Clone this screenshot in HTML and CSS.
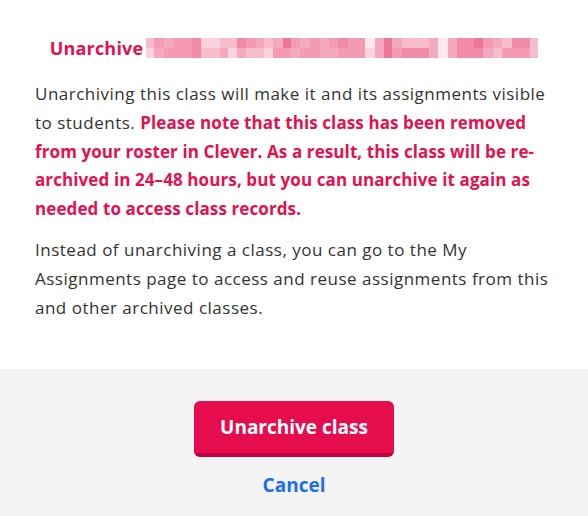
FILE: index.html
```html
<!DOCTYPE html>
<html lang="en">
<head>
    <meta charset="UTF-8">
    <title>Unarchive class</title>
    <link rel="stylesheet" href="styles.css">
</head>
<body>
    <div class="modal">
        <div class="modal-body">
            <h2 class="modal-title">
                <span>Unarchive</span>
                <!-- class name is redacted -->
                <span class="redacted"></span>
            </h2>
            <p>Unarchiving this class will make it and its assignments visible to students. <strong class="warning">Please note that this class has been removed from your roster in Clever. As a result, this class will be re-archived in 24–48 hours, but you can unarchive it again as needed to access class records.</strong></p>
            <p>Instead of unarchiving a class, you can go to the My Assignments page to access and reuse assignments from this and other archived classes.</p>
        </div>
        <div class="modal-footer">
            <button class="primary-btn">Unarchive class</button>
            <a href="#" class="cancel-link">Cancel</a>
        </div>
    </div>
</body>
</html>
```

FILE: styles.css
```css
body {
    margin: 0;
    font-family: "Open Sans", "Noto Sans", sans-serif;
    background-color: #ffffff;
    color: #333333;
}
.modal {
    width: 588px;
    height: 516px;
    display: flex;
    flex-direction: column;
}
.modal-body {
    padding: 34px 35px 0 35px;
    height: 336px;
}
.modal-title {
    display: flex;
    align-items: center;
    justify-content: center;
    gap: 3px;
    margin: 0 0 18px 0;
    font-size: 18px;
    font-weight: 700;
    letter-spacing: 0.2px;
    color: #e5104f;
    line-height: 28px;
}
.redacted {
    width: 392px;
    height: 20px;
    background-image:
        linear-gradient(to right,
            #f7bccd 0 2.1%, #f39ab4 2.1% 4.5%, #f5a9c0 4.5% 6.9%, #f39ab4 6.9% 11.7%,
            #f08aa9 11.7% 14.1%, #fad3df 14.1% 18.9%, #f7bccd 18.9% 23.2%, #f08aa9 23.2% 25.6%,
            #f39ab4 25.6% 28%, #f5a9c0 28% 30.1%, #f7bccd 30.1% 32.5%, #f5a9c0 32.5% 34.9%,
            #ec769a 34.9% 37.1%, #f39ab4 37.1% 39.4%, #f5a9c0 39.4% 41.9%, #f39ab4 41.9% 44.3%,
            #f5a9c0 44.3% 46.7%, #f39ab4 46.7% 49.1%, #f08aa9 49.1% 51.5%, #f39ab4 51.5% 55.9%,
            #fde9ef 55.9% 58.3%, #f5a9c0 58.3% 60.7%, #ec769a 60.7% 62.8%, #f5a9c0 62.8% 65.2%,
            #f7bccd 65.2% 72.2%, #f5a9c0 72.2% 74.6%, #fde9ef 74.6% 77%, #f5a9c0 77% 79.4%,
            #f08aa9 79.4% 83.7%, #ec769a 83.7% 86%, #f39ab4 86% 88.5%, #f5a9c0 88.5% 90.9%,
            #f7bccd 90.9% 93.3%, #f08aa9 93.3% 97.9%, #f7bccd 97.9% 100%),
        linear-gradient(to right,
            #fad3df 0 2.1%, #f5a9c0 2.1% 4.5%, #f39ab4 4.5% 11.7%, #f08aa9 11.7% 14.1%,
            #f7bccd 14.1% 18.9%, #f5a9c0 18.9% 21%, #fad3df 21% 23.2%, #f5a9c0 23.2% 25.6%,
            #f7bccd 25.6% 30.1%, #fad3df 30.1% 32.5%, #f39ab4 32.5% 37.1%, #f5a9c0 37.1% 39.4%,
            #f39ab4 39.4% 44.3%, #f5a9c0 44.3% 49.1%, #f39ab4 49.1% 55.9%, #fad3df 55.9% 58.3%,
            #f5a9c0 58.3% 60.7%, #ec769a 60.7% 62.8%, #f39ab4 62.8% 65.2%, #f08aa9 65.2% 72.2%,
            #f5a9c0 72.2% 74.6%, #fde9ef 74.6% 77%, #f5a9c0 77% 79.4%, #f08aa9 79.4% 86%,
            #f5a9c0 86% 88.5%, #f7bccd 88.5% 90.9%, #f39ab4 90.9% 97.9%, #f7bccd 97.9% 100%);
    background-size: 100% 50%;
    background-position: top, bottom;
    background-repeat: no-repeat;
}
.modal-body p {
    margin: 0 0 12px 0;
    font-size: 17px;
    line-height: 28.8px;
    letter-spacing: 0.5px;
}
.warning {
    color: #e5104f;
    font-weight: 700;
    letter-spacing: 0.1px;
}
.modal-footer {
    flex: 1;
    background-color: #f4f4f4;
    border-top: 1px solid #e8e8e8;
    display: flex;
    flex-direction: column;
    align-items: center;
    padding-top: 30px;
}
.primary-btn {
    width: 200px;
    height: 56px;
    border: none;
    border-bottom: 4px solid #c30040;
    border-radius: 6px;
    background-color: #e50d4d;
    color: #ffffff;
    font-family: inherit;
    font-size: 19px;
    font-weight: 700;
    cursor: pointer;
}
.cancel-link {
    margin-top: 15px;
    color: #1b6ef3;
    font-size: 19px;
    font-weight: 700;
    text-decoration: none;
}
```
